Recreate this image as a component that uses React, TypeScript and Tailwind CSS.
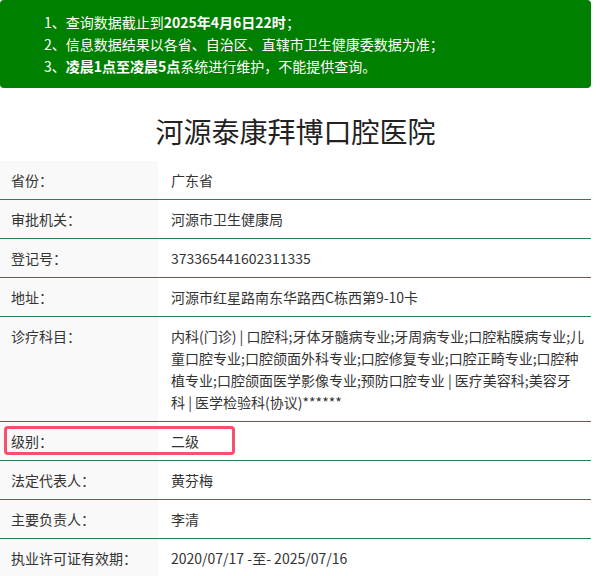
const rows: { label: string; value: string; mark?: boolean }[] = [
  { label: "省份：", value: "广东省" },
  { label: "审批机关：", value: "河源市卫生健康局" },
  { label: "登记号：", value: "373365441602311335" },
  { label: "地址：", value: "河源市红星路南东华路西C栋西第9-10卡" },
  {
    label: "诊疗科目：",
    value:
      "内科(门诊) | 口腔科;牙体牙髓病专业;牙周病专业;口腔粘膜病专业;儿童口腔专业;口腔颌面外科专业;口腔修复专业;口腔正畸专业;口腔种植专业;口腔颌面医学影像专业;预防口腔专业 | 医疗美容科;美容牙\n科 | 医学检验科(协议)******",
  },
  { label: "级别：", value: "二级", mark: true },
  { label: "法定代表人：", value: "黄芬梅" },
  { label: "主要负责人：", value: "李清" },
  { label: "执业许可证有效期：", value: "2020/07/17 -至- 2025/07/16" },
];

export default function App() {
  return (
    <div className="w-[591px] bg-white font-['Noto_Sans_CJK_SC',sans-serif] text-[14px] text-[#333]">
      <div className="rounded-[4px] bg-[#008000] py-[11px] pl-[44px] leading-[22px] text-white">
        <p>
          1、查询数据截止到<b>2025年4月6日22时</b>；
        </p>
        <p>2、信息数据结果以各省、自治区、直辖市卫生健康委数据为准；</p>
        <p>
          3、<b>凌晨1点至凌晨5点</b>系统进行维护，不能提供查询。
        </p>
      </div>

      <h1 className="pt-[24px] pb-[11px] text-center text-[28px] leading-[38px] text-[#222]">
        河源泰康拜博口腔医院
      </h1>

      <div>
        {rows.map((r) => (
          <div
            key={r.label}
            className="relative flex border-b border-[#2e7d4f] leading-[22px]"
          >
            <div className="w-[158px] shrink-0 bg-[#f9f9f9] py-[8px] pl-[11px]">
              {r.label}
            </div>
            <div className="flex-1 whitespace-pre-line py-[8px] pl-[13px] pr-[4px]">
              {r.value}
            </div>
            {r.mark ? (
              <div className="absolute left-[4px] top-[4px] h-[29px] w-[231px] rounded-[4px] border-[3px] border-[#f5516c]" />
            ) : null}
          </div>
        ))}
      </div>
    </div>
  );
}
